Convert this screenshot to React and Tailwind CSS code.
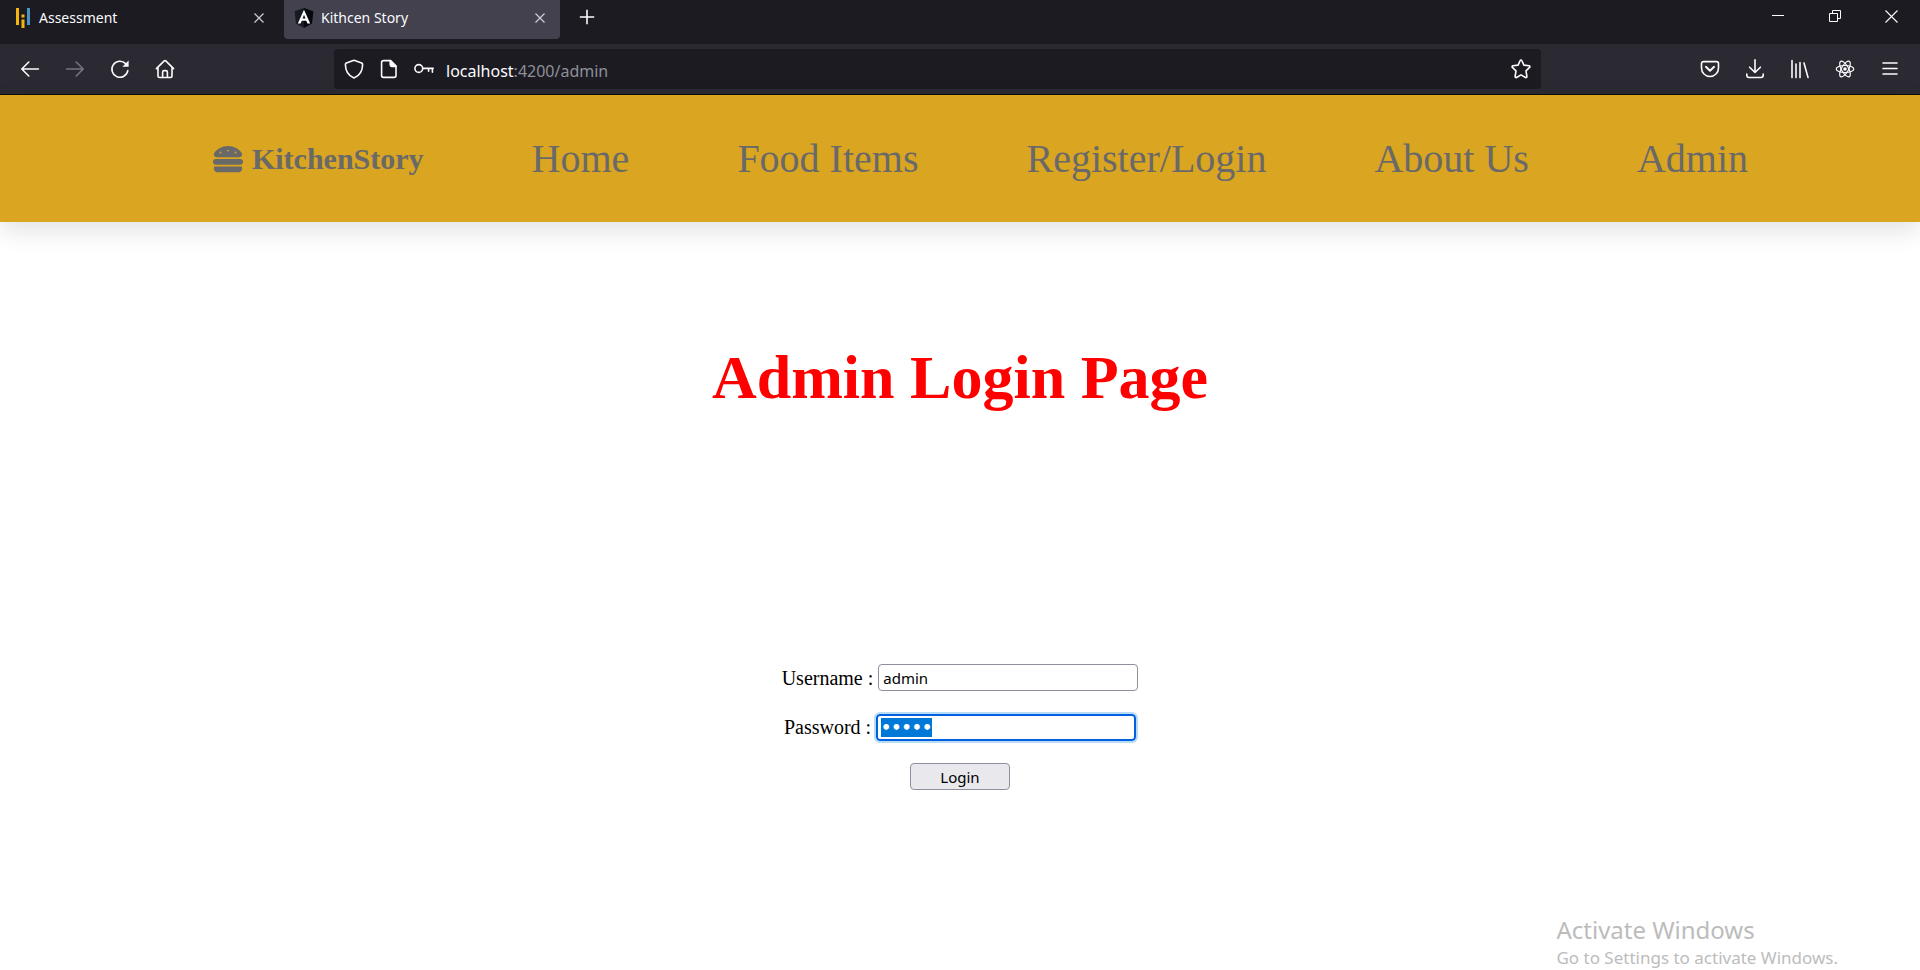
import { useEffect, useRef } from 'react';

const ICON = {
  viewBox: '0 0 20 20',
  fill: 'none',
  stroke: 'currentColor',
  strokeWidth: 1.6,
  strokeLinecap: 'round',
  strokeLinejoin: 'round',
  className: 'size-5 shrink-0',
  'aria-hidden': true,
};

const BackIcon = () => (
  <svg {...ICON}><path d="M18.4 10H1.8M8.8 3 1.8 10l7 7" /></svg>
);
const ForwardIcon = () => (
  <svg {...ICON}><path d="M1.6 10h16.6M11.2 3l7 7-7 7" /></svg>
);
const ReloadIcon = () => (
  <svg {...ICON}>
    <path d="M17.8 11.6A8 8 0 1 1 15.6 4.6" />
    <path d="M18.6 1.6v6.2h-6.2z" fill="currentColor" stroke="none" />
  </svg>
);
const HomeIcon = () => (
  <svg {...ICON}>
    <path d="M1.4 9.6 9.2 1.9a1.2 1.2 0 0 1 1.6 0l7.8 7.7M3 8.6v8.2c0 1 .7 1.7 1.7 1.7h10.6c1 0 1.7-.7 1.7-1.7V8.6" />
    <path d="M7.6 18.2v-5c0-1 .6-1.6 1.5-1.6h1.8c.9 0 1.5.6 1.5 1.6v5" />
  </svg>
);
const ShieldIcon = () => (
  <svg {...ICON}>
    <path d="M10 1.2 17.6 4c.7.3 1 .7 1 1.4 0 6-2.6 11-8.6 13.6C4 16.4 1.4 11.4 1.4 5.4c0-.7.3-1.1 1-1.4z" />
  </svg>
);
const PageIcon = () => (
  <svg {...ICON}>
    <path d="M4.5 1.6h7L17 7.1v9.4c0 1-.8 1.9-1.9 1.9H4.5c-1 0-1.9-.9-1.9-1.9v-13c0-1 .9-1.9 1.9-1.9z" />
    <path d="M11.2 1.6v4.2c0 1 .6 1.6 1.6 1.6H17z" fill="currentColor" />
  </svg>
);
const KeyIcon = () => (
  <svg {...ICON}>
    <circle cx="4.8" cy="9.5" r="3.9" />
    <path d="M8.8 9.4h10.4M14.6 9.6v2.6M18.4 9.6v3.6" />
  </svg>
);
const StarIcon = () => (
  <svg {...ICON}>
    <path d="M9.2 1.5c.3-.7 1.3-.7 1.6 0l2.1 4.6 5.2.7c.8.1 1.1 1 .5 1.6l-3.6 3.5.9 5.6c.1.8-.7 1.3-1.4 1L10 15.9l-4.5 2.6c-.7.3-1.5-.2-1.4-1l.9-5.6L1.4 8.4c-.6-.6-.3-1.5.5-1.6l5.2-.7z" />
  </svg>
);
const PocketIcon = () => (
  <svg {...ICON}>
    <path d="M3.5 2.6h13c1.1 0 2 .8 2 2V9a8.5 8.5 0 0 1-17 0V4.6c0-1.2.9-2 2-2z" />
    <path d="m5.9 7.8 4.1 4 4.1-4" strokeWidth="1.9" />
  </svg>
);
const DownloadIcon = () => (
  <svg {...ICON}>
    <path d="M10 .8v12.6M4.6 8.2l5.4 5.3 5.4-5.3M1.8 15v1.3c0 1.2 1 2.2 2.2 2.2h12c1.2 0 2.2-1 2.2-2.2V15" />
  </svg>
);
const LibraryIcon = () => (
  <svg {...ICON}>
    <path d="M2 1.6v17M6 5v13.6M10 3.6v15M14 4l4 14.4" />
  </svg>
);
const ReactIcon = () => (
  <svg {...ICON} strokeWidth="1.2">
    <ellipse cx="10" cy="10" rx="8.8" ry="3.5" />
    <ellipse cx="10" cy="10" rx="8.8" ry="3.5" transform="rotate(60 10 10)" />
    <ellipse cx="10" cy="10" rx="8.8" ry="3.5" transform="rotate(120 10 10)" />
    <circle cx="10" cy="10" r="1.8" fill="currentColor" stroke="none" />
  </svg>
);
const MenuIcon = () => (
  <svg {...ICON}><path d="M3 4h14M3 9.5h14M3 15h14" /></svg>
);
const CloseTabIcon = () => (
  <svg viewBox="0 0 10 10" className="size-[10px]" fill="none" stroke="currentColor" strokeWidth="1.2" aria-hidden="true">
    <path d="M.5.5l9 9M9.5.5l-9 9" />
  </svg>
);
const PlusIcon = () => (
  <svg viewBox="0 0 16 16" className="size-4" fill="none" stroke="currentColor" strokeWidth="1.6" aria-hidden="true">
    <path d="M8 .8v14.4M.8 8h14.4" />
  </svg>
);
const AssessmentLogo = () => (
  <svg viewBox="0 0 14 20" className="h-5 w-[14px]" aria-hidden="true">
    <path fill="#f5b50f" d="M0 0h3v17H0zM5.5 6.5h3v3h-3zM5.5 11.5h3V20h-3z" />
    <path fill="#4596c7" d="M11 0h3v17h-3z" />
  </svg>
);
const AngularLogo = () => (
  <svg viewBox="0 0 20 20" className="size-5" aria-hidden="true">
    <path fill="#171a23" d="M10 0 .6 3.2 2 15.4 10 20z" />
    <path fill="#05080f" d="m10 0 9.4 3.2L18 15.4 10 20z" />
    <path fill="#fff" fillRule="evenodd" d="M10 1.8 3.8 15.6h2.8l1.1-2.8h4.6l1.1 2.8h2.8zm0 5 1.5 3.7h-3z" />
  </svg>
);
const BurgerIcon = () => (
  <svg viewBox="0 0 512 512" className="size-[30px]" fill="currentColor" aria-hidden="true">
    <path d="M464 256H48a48 48 0 0 0 0 96h416a48 48 0 0 0 0-96zm16 128H32a16 16 0 0 0-16 16v16a64 64 0 0 0 64 64h352a64 64 0 0 0 64-64v-16a16 16 0 0 0-16-16zM58.600 224h394.800c34.600 0 54.600-43.900 34.800-75.900C448 83.200 359.600 32.100 256 32c-103.500.1-192 51.200-232.200 116.100C4 180.100 24.100 224 58.600 224zM384 128a16 16 0 1 1-16 16 16 16 0 0 1 16-16zM256 96a16 16 0 1 1-16 16 16 16 0 0 1 16-16zm-128 32a16 16 0 1 1-16 16 16 16 0 0 1 16-16z" />
  </svg>
);

function ToolButton({ label, disabled, children }) {
  return (
    <button
      type="button"
      aria-label={label}
      disabled={disabled}
      className="flex h-10 w-[45px] items-center justify-center disabled:text-[#77767f]"
    >
      {children}
    </button>
  );
}

function Tab({ logo, title, active }) {
  return (
    <div
      className={
        active
          ? 'flex h-[39px] w-[276px] items-center gap-[7px] rounded-b bg-[#42414d] pr-[15px] pb-1 pl-[10px]'
          : 'flex h-[39px] w-[276px] items-center gap-[9px] pr-3 pb-1 pl-4'
      }
    >
      {logo}
      <a href="#" className="flex-1">{title}</a>
      <button type="button" aria-label={`Close ${title}`} className="text-[#cfcfd8]">
        <CloseTabIcon />
      </button>
    </div>
  );
}

function BrowserChrome() {
  return (
    <header className="border-b border-[#0c0c0d] bg-[#2b2a33] font-['Noto_Sans',sans-serif] text-[#fbfbfe]">
      <div className="flex h-11 bg-[#1c1b22] text-sm">
        <Tab logo={<AssessmentLogo />} title="Assessment" />
        <div className="w-2" />
        <Tab active logo={<AngularLogo />} title="Kithcen Story" />
        <button type="button" aria-label="New tab" className="flex h-[34px] w-[54px] items-center justify-center">
          <PlusIcon />
        </button>
        <div className="flex-1" />
        <div className="flex h-8">
          <button type="button" aria-label="Minimize" className="flex w-[57px] items-center justify-center">
            <svg viewBox="0 0 12 12" className="size-3" aria-hidden="true"><path d="M0 5h12v1H0z" fill="currentColor" /></svg>
          </button>
          <button type="button" aria-label="Restore" className="flex w-[57px] items-center justify-center">
            <svg viewBox="0 0 12 12" className="size-3" fill="none" stroke="currentColor" aria-hidden="true">
              <path d="M.5 3.5h8v8h-8zM3.5 3.5v-3h8v8h-3" />
            </svg>
          </button>
          <button type="button" aria-label="Close" className="flex w-[57px] items-center justify-center">
            <svg viewBox="0 0 13 13" className="size-[13px]" fill="none" stroke="currentColor" strokeWidth="1.1" aria-hidden="true">
              <path d="m.5.5 12 12M12.5.5l-12 12" />
            </svg>
          </button>
        </div>
      </div>
      <div className="flex h-[50px] items-center pr-2 pl-[7px]">
        <ToolButton label="Back"><BackIcon /></ToolButton>
        <ToolButton label="Forward" disabled><ForwardIcon /></ToolButton>
        <ToolButton label="Reload"><ReloadIcon /></ToolButton>
        <ToolButton label="Home"><HomeIcon /></ToolButton>
        <div className="mr-[146px] ml-[147px] flex h-10 flex-1 items-center gap-[15px] rounded bg-[#1c1b22] px-[10px]">
          <ShieldIcon />
          <PageIcon />
          <KeyIcon />
          <a href="#" className="-ml-[3px] flex-1 pt-[3px] text-base text-[#8f8f98]">
            <span className="text-[#fbfbfe]">localhost</span>:4200/admin
          </a>
          <button type="button" aria-label="Bookmark this page"><StarIcon /></button>
        </div>
        <ToolButton label="Save to Pocket"><PocketIcon /></ToolButton>
        <ToolButton label="Downloads"><DownloadIcon /></ToolButton>
        <ToolButton label="Library"><LibraryIcon /></ToolButton>
        <ToolButton label="React Developer Tools"><ReactIcon /></ToolButton>
        <ToolButton label="Menu"><MenuIcon /></ToolButton>
      </div>
    </header>
  );
}

const LINKS = ['Home', 'Food Items', 'Register/Login', 'About Us', 'Admin'];

function SiteNav() {
  return (
    <nav className="bg-[#daa520] pt-[41px] pb-10 text-[#696969] shadow-[0_8px_24px_rgba(0,0,0,0.12)]">
      <ul className="flex items-center justify-center gap-[108px] pl-[41px] text-[40px] leading-[46px]">
        <li>
          <a href="#" className="flex items-center gap-[9px] text-[30px] font-bold">
            <BurgerIcon />
            KitchenStory
          </a>
        </li>
        {LINKS.map((name) => (
          <li key={name}><a href="#">{name}</a></li>
        ))}
      </ul>
    </nav>
  );
}

function LoginForm() {
  const password = useRef(null);
  useEffect(() => {
    password.current.focus();
    password.current.select();
  }, []);

  return (
    <form className="mt-[250px] flex flex-col items-center gap-[22px] text-xl leading-[27px]" onSubmit={(e) => e.preventDefault()}>
      <div className="flex items-center gap-[5px]">
        <label htmlFor="username" className="pt-0.5">Username :</label>
        <input
          id="username"
          type="text"
          defaultValue="admin"
          className="h-[27px] w-[260px] rounded-sm border border-[#8f8f9d] px-1 pt-0.5 font-['Noto_Sans',sans-serif] text-[15px]"
        />
      </div>
      <div className="flex items-center gap-[5px]">
        <label htmlFor="password">Password :</label>
        <input
          id="password"
          ref={password}
          type="password"
          defaultValue="admin"
          className="h-[27px] w-[260px] rounded-sm border-2 border-[#0060df] px-[3px] font-['DejaVu_Sans',sans-serif] text-base font-bold outline-2 outline-[#b9dcf5] selection:bg-[#0078d7] selection:text-white"
        />
      </div>
      <button
        type="submit"
        className="h-[27px] w-[100px] rounded border border-[#8f8f9d] bg-[#e9e9ed] pt-0.5 font-['Noto_Sans',sans-serif] text-[15px] leading-none"
      >
        Login
      </button>
    </form>
  );
}

export default function App() {
  return (
    <div className="flex min-h-screen flex-col bg-white font-['Liberation_Serif',serif] text-black">
      <BrowserChrome />
      <SiteNav />
      <main>
        <h1 className="mt-[119px] text-center text-[62px] leading-[72px] font-bold text-[#ff0000]">Admin Login Page</h1>
        <LoginForm />
      </main>
      <aside className="absolute right-[82px] bottom-0 font-['Noto_Sans',sans-serif] text-[#bcbcbc]">
        <p className="text-2xl leading-8">Activate Windows</p>
        <p className="text-[17px] leading-6">Go to Settings to activate Windows.</p>
      </aside>
    </div>
  );
}
